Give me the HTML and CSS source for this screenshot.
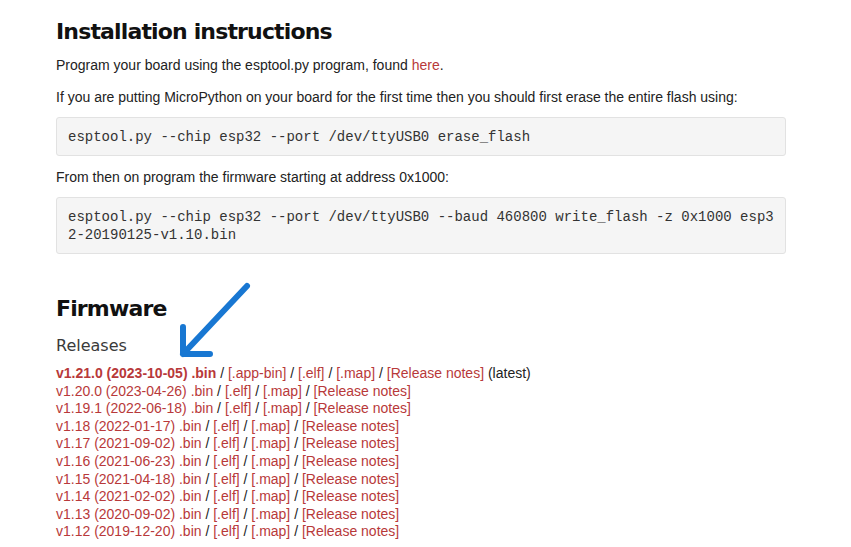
FILE: index.html
```html
<!DOCTYPE html>
<html>
<head>
<meta charset="utf-8">
<link rel="stylesheet" href="styles.css">
</head>
<body>
<main class="page">
  <h2 class="h2 first">Installation instructions</h2>
  <p class="p">Program your board using the esptool.py program, found <a class="link" href="#">here</a>.</p>
  <p class="p">If you are putting MicroPython on your board for the first time then you should first erase the entire flash using:</p>
  <pre class="code">esptool.py --chip esp32 --port /dev/ttyUSB0 erase_flash</pre>
  <p class="p">From then on program the firmware starting at address 0x1000:</p>
  <pre class="code">esptool.py --chip esp32 --port /dev/ttyUSB0 --baud 460800 write_flash -z 0x1000 esp32-20190125-v1.10.bin</pre>

  <div class="fw">
    <h2 class="h2">Firmware</h2>
    <svg class="arrow" width="90" height="90" viewBox="0 0 90 90">
      <path d="M75 9 L11 77 M11 50 L11 77 L38 77" fill="none" stroke="#1877d2" stroke-width="6" stroke-linecap="round" stroke-linejoin="round"/>
    </svg>
  </div>
  <h3 class="h3">Releases</h3>
  <ul class="rel">
    <li><a class="link b" href="#">v1.21.0 (2023-10-05) .bin</a> / <a class="link" href="#">[.app-bin]</a> / <a class="link" href="#">[.elf]</a> / <a class="link" href="#">[.map]</a> / <a class="link" href="#">[Release notes]</a> (latest)</li>
    <li><a class="link" href="#">v1.20.0 (2023-04-26) .bin</a> / <a class="link" href="#">[.elf]</a> / <a class="link" href="#">[.map]</a> / <a class="link" href="#">[Release notes]</a></li>
    <li><a class="link" href="#">v1.19.1 (2022-06-18) .bin</a> / <a class="link" href="#">[.elf]</a> / <a class="link" href="#">[.map]</a> / <a class="link" href="#">[Release notes]</a></li>
    <li><a class="link" href="#">v1.18 (2022-01-17) .bin</a> / <a class="link" href="#">[.elf]</a> / <a class="link" href="#">[.map]</a> / <a class="link" href="#">[Release notes]</a></li>
    <li><a class="link" href="#">v1.17 (2021-09-02) .bin</a> / <a class="link" href="#">[.elf]</a> / <a class="link" href="#">[.map]</a> / <a class="link" href="#">[Release notes]</a></li>
    <li><a class="link" href="#">v1.16 (2021-06-23) .bin</a> / <a class="link" href="#">[.elf]</a> / <a class="link" href="#">[.map]</a> / <a class="link" href="#">[Release notes]</a></li>
    <li><a class="link" href="#">v1.15 (2021-04-18) .bin</a> / <a class="link" href="#">[.elf]</a> / <a class="link" href="#">[.map]</a> / <a class="link" href="#">[Release notes]</a></li>
    <li><a class="link" href="#">v1.14 (2021-02-02) .bin</a> / <a class="link" href="#">[.elf]</a> / <a class="link" href="#">[.map]</a> / <a class="link" href="#">[Release notes]</a></li>
    <li><a class="link" href="#">v1.13 (2020-09-02) .bin</a> / <a class="link" href="#">[.elf]</a> / <a class="link" href="#">[.map]</a> / <a class="link" href="#">[Release notes]</a></li>
    <li><a class="link" href="#">v1.12 (2019-12-20) .bin</a> / <a class="link" href="#">[.elf]</a> / <a class="link" href="#">[.map]</a> / <a class="link" href="#">[Release notes]</a></li>
  </ul>
</main>
</body>
</html>
```
FILE: styles.css
```css
html, body {
  margin: 0;
  padding: 0;
  background: #fff;
}
body {
  font-family: "Liberation Sans", Arial, sans-serif;
  font-size: 14px;
  color: #222;
}
.page {
  width: 730px;
  margin-left: 56px;
  padding-top: 17px;
}
.h2 {
  font-family: "DejaVu Sans", sans-serif;
  font-weight: bold;
  font-size: 22px;
  line-height: 30px;
  letter-spacing: -0.85px;
  margin: 0;
  color: #111;
}
.p {
  margin: 14px 0 0 0;
  line-height: 18px;
}
.page > .h2.first + .p {
  margin-top: 9px;
}
.code + .p {
  margin-top: 12px;
}
.code {
  margin: 11px 0 0 0;
  padding: 10px 11px 9px 11px;
  background: #f5f5f5;
  border: 1px solid #e2e2e2;
  border-radius: 3px;
  font-family: "Liberation Mono", "Courier New", monospace;
  font-size: 14px;
  line-height: 18px;
  color: #333;
  white-space: pre-wrap;
  word-break: break-all;
}
.fw {
  position: relative;
  margin-top: 40px;
}
.arrow {
  position: absolute;
  left: 116px;
  top: -17px;
}
.h3 {
  font-family: "DejaVu Sans", sans-serif;
  font-weight: normal;
  font-size: 16px;
  line-height: 20px;
  margin: 12px 0 0 0;
  color: #3a3a3a;
}
.rel {
  list-style: none;
  margin: 9px 0 0 0;
  padding: 0;
  line-height: 17.6px;
  color: #222;
}
.link {
  color: #b8393a;
  text-decoration: none;
}
.link.b {
  font-weight: bold;
}
```
